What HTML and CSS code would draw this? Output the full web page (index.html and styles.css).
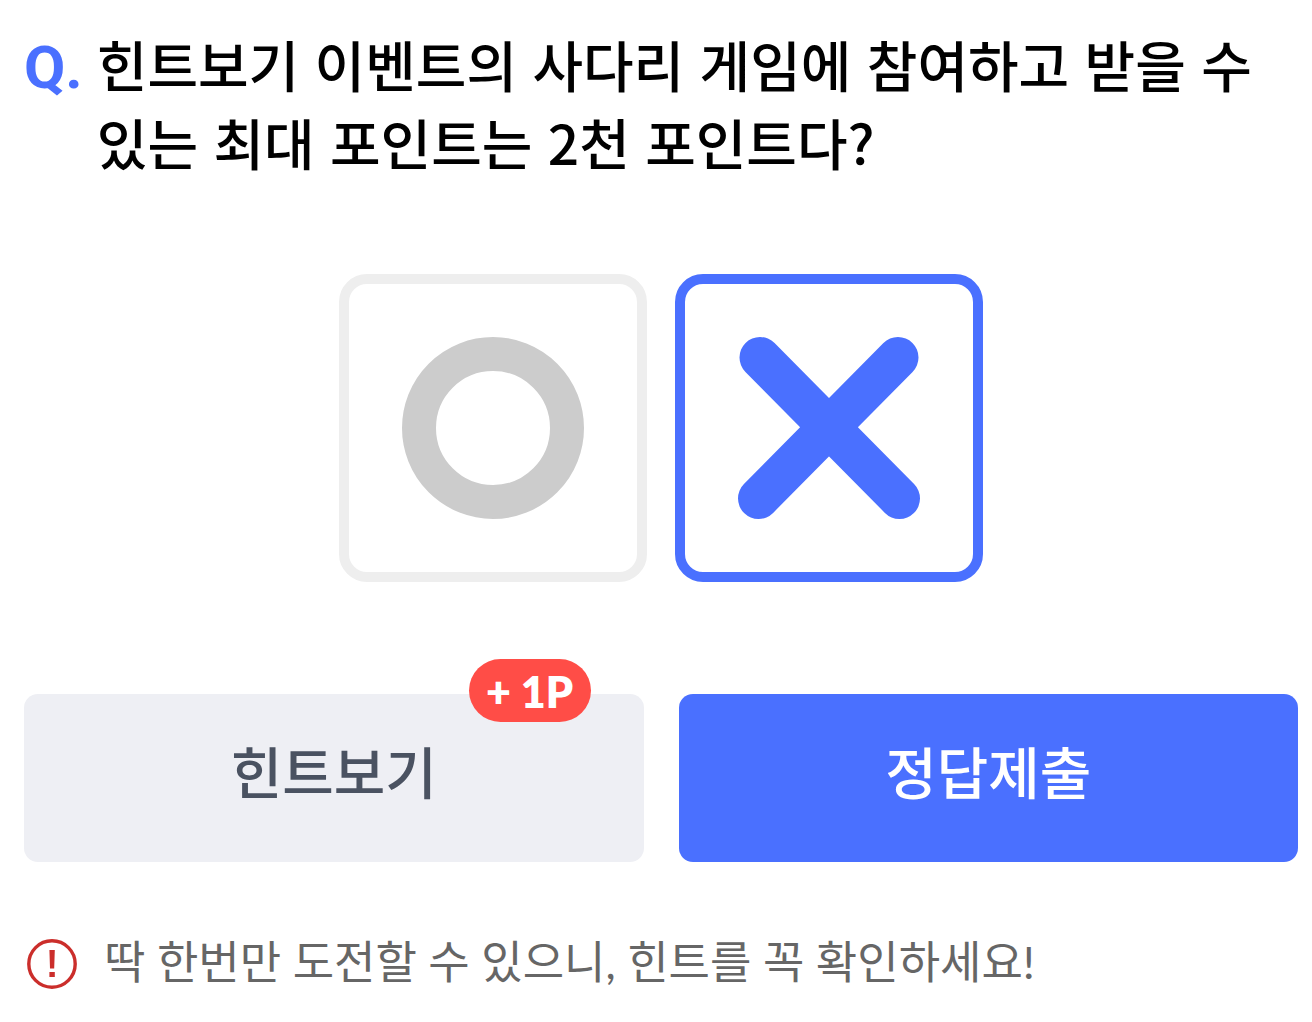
FILE: index.html
```html
<!DOCTYPE html>
<html lang="ko">
<head>
<meta charset="utf-8">
<meta name="viewport" content="width=device-width, initial-scale=1">
<title>OX 퀴즈</title>
<link rel="stylesheet" href="styles.css">
</head>
<body>
<main class="quiz">
  <h1 class="question">
    <span class="question-mark">Q.</span>
    <span class="question-text">힌트보기 이벤트의 사다리 게임에 참여하고 받을 수 있는 최대 포인트는 2천 포인트다?</span>
  </h1>
  <div class="choices">
    <button class="choice" type="button" aria-label="O" aria-pressed="false">
      <svg class="choice-icon" viewBox="0 0 184 184" aria-hidden="true"><circle cx="92" cy="92" r="74" fill="none" stroke="#cccccc" stroke-width="34"/></svg>
    </button>
    <button class="choice choice-selected" type="button" aria-label="X" aria-pressed="true">
      <svg class="choice-icon" viewBox="0 0 184 184" aria-hidden="true"><path d="M23 21.500 162.500 162.500M161 21.500 21.500 162.500" fill="none" stroke="#4a70ff" stroke-width="41" stroke-linecap="round"/></svg>
    </button>
  </div>
  <div class="actions">
    <button class="action action-hint" type="button">힌트보기<span class="badge">+ 1P</span></button>
    <button class="action action-submit" type="button">정답제출</button>
  </div>
  <p class="notice">
    <svg class="notice-icon" viewBox="0 0 52 52" aria-hidden="true"><circle cx="26" cy="26" r="23.200" fill="none" stroke="#cb2e2b" stroke-width="3.400"/><path d="M23.400 12h5.400l-.6 18.500h-4.200zM23.400 34h5.400v5h-5.400z" fill="#cb2e2b"/></svg>
    <span>딱 한번만 도전할 수 있으니, 힌트를 꼭 확인하세요!</span>
  </p>
</main>
</body>
</html>
```
FILE: styles.css
```css
* {
  box-sizing: border-box;
}

body {
  margin: 0;
  background: #fff;
  color: #000;
  font-family: "Noto Sans CJK KR", sans-serif;
}

.quiz {
  padding: 24px 14px 24px 24px;
}

.question {
  display: flex;
  gap: 14px;
  margin: 0;
  font-size: 55px;
  font-weight: 500;
  line-height: 78px;
  word-break: keep-all;
}

.question-mark {
  color: #4a70ff;
  font-family: Roboto, sans-serif;
  font-size: 60px;
  font-weight: 700;
  line-height: 88px;
}

.choices {
  display: flex;
  justify-content: center;
  gap: 28px;
  margin-top: 94px;
}

.choice {
  display: grid;
  place-items: center;
  width: 308px;
  height: 308px;
  padding: 0;
  border: 10px solid #eeeeee;
  border-radius: 28px;
  background: #fff;
}

.choice-selected {
  border-color: #4a70ff;
}

.choice-icon {
  width: 184px;
  height: 184px;
}

.actions {
  display: grid;
  grid-template-columns: 1fr 1fr;
  gap: 35px;
  margin-top: 112px;
}

.action {
  position: relative;
  height: 168px;
  padding: 0 0 18px;
  border: 0;
  border-radius: 14px;
  font-family: inherit;
  font-size: 56px;
  font-weight: 500;
}

.action-hint {
  background: #eeeff4;
  color: #4a5261;
}

.action-submit {
  background: #4a70ff;
  color: #fff;
}

.badge {
  position: absolute;
  top: -35px;
  right: 53px;
  width: 122px;
  height: 63px;
  border-radius: 32px;
  background: #ff4d47;
  color: #fff;
  font-family: Lato, sans-serif;
  font-size: 43px;
  font-weight: 800;
  line-height: 65px;
}

.notice {
  display: flex;
  align-items: flex-end;
  gap: 26px;
  margin: 66px 0 0;
  padding-left: 2px;
  color: #666;
  font-family: Lato, "Noto Sans CJK KR", sans-serif;
  font-size: 45px;
  line-height: 68px;
}

.notice-icon {
  flex: none;
  width: 52px;
  height: 52px;
  margin-bottom: 6px;
}
```
